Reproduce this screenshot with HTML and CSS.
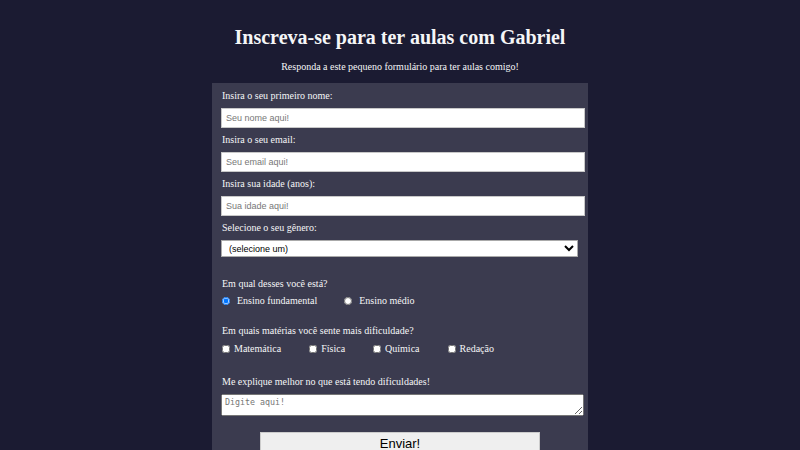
FILE: index.html
```html
<!DOCTYPE html>
<html lang="pt">
<head>
<meta charset="utf-8">
<title>Inscreva-se</title>
<link rel="stylesheet" href="styles.css">
</head>
<body>
<h1 class="title">Inscreva-se para ter aulas com Gabriel</h1>
<p class="subtitle">Responda a este pequeno formulário para ter aulas comigo!</p>
<form class="survey">
  <label class="field-label" for="name">Insira o seu primeiro nome:</label>
  <input class="text-input" id="name" type="text" placeholder="Seu nome aqui!">
  <label class="field-label" for="email">Insira o seu email:</label>
  <input class="text-input" id="email" type="email" placeholder="Seu email aqui!">
  <label class="field-label" for="age">Insira sua idade (anos):</label>
  <input class="text-input" id="age" type="number" placeholder="Sua idade aqui!">
  <label class="field-label" for="gender">Selecione o seu gênero:</label>
  <select class="select-input" id="gender">
    <option>(selecione um)</option>
  </select>

  <p class="question">Em qual desses você está?</p>
  <div class="options radios">
    <label class="option"><input type="radio" name="level" checked>Ensino fundamental</label>
    <label class="option"><input type="radio" name="level">Ensino médio</label>
  </div>

  <p class="question q2">Em quais matérias você sente mais dificuldade?</p>
  <div class="options checks">
    <label class="option"><input type="checkbox">Matemática</label>
    <label class="option"><input type="checkbox">Física</label>
    <label class="option"><input type="checkbox">Química</label>
    <label class="option"><input type="checkbox">Redação</label>
  </div>

  <p class="question q3">Me explique melhor no que está tendo dificuldades!</p>
  <textarea class="textarea" placeholder="Digite aqui!"></textarea>

  <button class="submit" type="submit">Enviar!</button>
</form>
</body>
</html>
```
FILE: styles.css
```css
html, body {
  margin: 0;
  padding: 0;
}
body {
  background: #1b1b32;
  color: #f5f6f7;
  font-family: "Liberation Serif", "Times New Roman", serif;
  font-size: 10px;
}
.title {
  margin: 25px 0 0;
  text-align: center;
  font-size: 20px;
  line-height: 24px;
  font-weight: bold;
}
.subtitle {
  margin: 11px 0 0;
  text-align: center;
  font-size: 10px;
  line-height: 14px;
}
.survey {
  width: 376px;
  margin: 9px auto 0;
  padding: 6px 9px 8px;
  box-sizing: border-box;
  background: #3b3b4f;
  display: flex;
  flex-direction: column;
}
.field-label {
  font-size: 10px;
  line-height: 14px;
  margin: 0 0 5px 1px;
}
.text-input {
  width: 364px;
  height: 20px;
  box-sizing: border-box;
  border: 1px solid #c8c8c8;
  background: #fff;
  padding: 0 4px;
  font-family: "Liberation Sans", Arial, sans-serif;
  font-size: 9px;
  margin: 0 0 5px;
}
.text-input::placeholder { color: #777; }
.select-input {
  width: 357px;
  height: 17px;
  box-sizing: border-box;
  font-family: "Liberation Sans", Arial, sans-serif;
  font-size: 9px;
  color: #000;
  background: #fff;
  border: 1px solid #aaa;
  padding: 0 3px;
  margin: 0;
}
.question {
  margin: 20px 0 0 1px;
  font-size: 10px;
  line-height: 14px;
}
.q2 { margin-top: 16px; }
.q3 { margin-top: 19px; }
.options {
  display: flex;
  margin-top: 3px;
}
.checks { margin-top: 4px; }
.option {
  display: flex;
  align-items: center;
  font-size: 10px;
  line-height: 14px;
}
.option input { margin: 0 0 0 1px; width: 8px; height: 8px; }
.radios input { margin-right: 7px; }
.checks input { margin-right: 4px; }
.radios .option:first-child { margin-right: 26px; }
.checks .option { margin-right: 27px; }
.textarea {
  margin: 5px 0 0;
  width: 363px;
  height: 22px;
  box-sizing: border-box;
  font-family: "DejaVu Sans Mono", monospace;
  font-size: 8.3px;
  padding: 2px 3px;
}
.submit {
  margin: 16px 0 0 39px;
  width: 280px;
  height: 22px;
  background: #efefef;
  border: 1px solid #ccc;
  color: #000;
  font-family: "Liberation Sans", Arial, sans-serif;
  font-size: 13px;
}
```
